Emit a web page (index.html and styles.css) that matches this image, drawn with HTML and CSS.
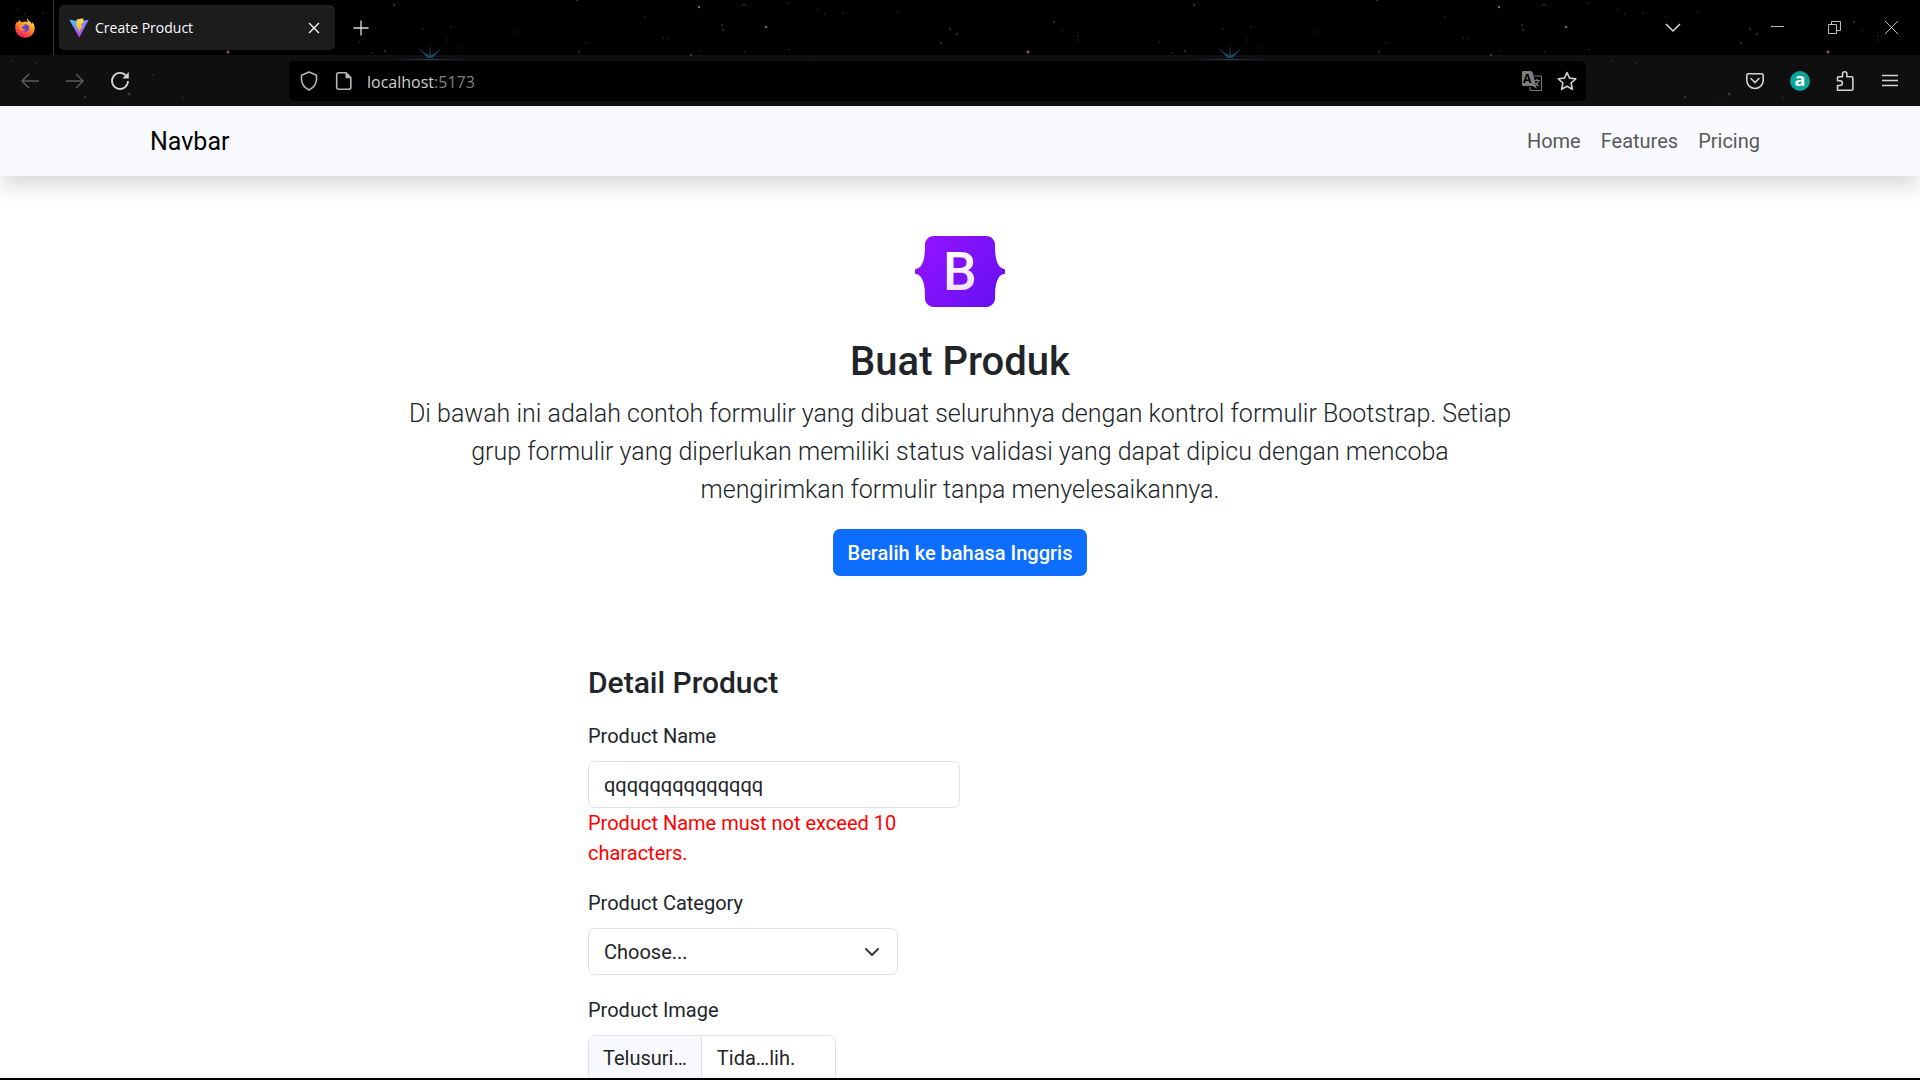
FILE: index.html
```html
<!DOCTYPE html>
<html lang="id">
<head>
<meta charset="utf-8">
<meta name="viewport" content="width=device-width, initial-scale=1">
<title>Create Product</title>
<link rel="stylesheet" href="styles.css">
</head>
<body>
<header class="browser">
  <svg class="sky" aria-hidden="true">
    <defs>
      <linearGradient id="ray" x1="0" x2="1"><stop offset="0" stop-color="#0b5f80" stop-opacity="0"/><stop offset=".5" stop-color="#2b8fb0"/><stop offset="1" stop-color="#0b5f80" stop-opacity="0"/></linearGradient>
      <pattern id="stars" width="800" height="106" patternUnits="userSpaceOnUse">
        <g fill="#fff">
          <g opacity=".4"><circle cx="699" cy="7" r="1.3"/><circle cx="766" cy="27" r="1.3"/></g>
          <g opacity=".2"><circle cx="394" cy="5" r="1.2"/><circle cx="577" cy="0" r="1.2"/><circle cx="723" cy="30" r="1"/><circle cx="722" cy="25" r="1"/><circle cx="385" cy="51" r="1.1"/><circle cx="579" cy="52" r="1.1"/><circle cx="157" cy="34" r="1"/><circle cx="150" cy="29" r="1"/><circle cx="141" cy="43" r="1"/><circle cx="254" cy="22" r="1"/><circle cx="129" cy="94" r="1.4"/><circle cx="744" cy="5" r="1"/></g>
          <g opacity=".1"><circle cx="18" cy="10" r="1"/><circle cx="43" cy="13" r="1"/><circle cx="98" cy="12" r="1"/><circle cx="25" cy="14" r="1"/><circle cx="262" cy="30" r="1"/><circle cx="278" cy="36" r="1"/><circle cx="278" cy="40" r="1"/><circle cx="359" cy="42" r="1"/><circle cx="372" cy="53" r="1"/><circle cx="423" cy="29" r="1"/><circle cx="451" cy="27" r="1"/><circle cx="447" cy="40" r="1"/><circle cx="459" cy="48" r="1"/><circle cx="515" cy="32" r="1"/><circle cx="586" cy="43" r="1"/><circle cx="645" cy="17" r="1"/><circle cx="663" cy="38" r="1"/><circle cx="668" cy="38" r="1"/><circle cx="700" cy="51" r="1"/><circle cx="788" cy="3" r="1"/><circle cx="789" cy="50" r="1"/><circle cx="745" cy="52" r="1"/><circle cx="153" cy="75" r="1"/><circle cx="56" cy="72" r="1"/><circle cx="183" cy="98" r="1"/><circle cx="12" cy="61" r="1"/><circle cx="36" cy="63" r="1"/><circle cx="120" cy="101" r="1"/></g>
        </g>
        <g fill="#d8805c"><circle cx="228" cy="52" r="1.5" opacity=".7"/><circle cx="691" cy="55" r="1.3" opacity=".35"/><circle cx="85" cy="97" r="1.4" opacity=".25"/></g>
        <path d="M429 58 430 44 431 58ZM428 58 418 48 431 57ZM432 58 442 48 429 57Z" fill="#166d92" opacity=".65"/>
        <path d="M390 59h80v1h-80z" fill="url(#ray)" opacity=".4"/>
      </pattern>
    </defs>
    <rect width="100%" height="100%" fill="url(#stars)"/>
  </svg>

  <div class="tabstrip">
    <button class="firefox" aria-label="Firefox View">
      <svg width="20" height="20" viewBox="0 0 20 20">
        <defs>
          <linearGradient id="fox" x1=".8" y1="0" x2=".3" y2="1"><stop offset="0" stop-color="#fff04a"/><stop offset=".4" stop-color="#ffa023"/><stop offset=".75" stop-color="#ff4a40"/><stop offset="1" stop-color="#e5187c"/></linearGradient>
          <radialGradient id="globe"><stop offset="0" stop-color="#5541c9"/><stop offset="1" stop-color="#8d3fd0"/></radialGradient>
        </defs>
        <path d="M12.200 0c-.6 2 .2 3 1 4C11.700 3.300 9 3.200 7.300 4.300 5.800 4.200 5 3 5 2.100 3.900 2.700 3.200 3.700 2.900 4.700L1.400 3.900C.5 5.600 0 8 .3 11A9.700 9 0 0 0 19.700 10.500C19.800 7.500 18.800 5.300 17 4c.2 1 .2 1.600 0 2.200C16 3.300 13 3 12.200 0Z" fill="url(#fox)"/>
        <circle cx="10.500" cy="10" r="3.800" fill="url(#globe)"/>
        <path d="M4 7c2-1.500 4-.5 6 0-1 1.500-2.500 1.300-3.500 2 .3 2 2 2.700 4 2.200-1.500 2-5 1.500-6-1Z" fill="#ff9a2b"/>
      </svg>
    </button>
    <div class="tab">
      <svg width="20" height="20" viewBox="0 0 20 20" aria-hidden="true">
        <defs>
          <linearGradient id="vite" x1="0" y1="0" x2=".6" y2="1"><stop offset="0" stop-color="#41d1ff"/><stop offset="1" stop-color="#bd34fe"/></linearGradient>
          <linearGradient id="bolt" x1="0" y1="0" x2="0" y2="1"><stop offset="0" stop-color="#ffe45c"/><stop offset="1" stop-color="#ffa800"/></linearGradient>
        </defs>
        <path d="M.3 1.800 10 3.300 19.700 1.800 10.300 19.500Z" fill="url(#vite)"/>
        <path d="M14.200.2 7.700 1.400 7.200 9.200 9.200 8.800 8.700 11.600 10.300 11.200 9.500 15.500 13.900 7.600 11.800 8 12.500 5.400 14.600 5Z" fill="url(#bolt)"/>
      </svg>
      <span class="tab-title">Create Product</span>
      <button class="tab-close" aria-label="Close tab"><svg width="12" height="12" viewBox="0 0 12 12"><path d="M1 1 11 11M11 1 1 11" stroke="#fbfbfe" stroke-width="1.300"/></svg></button>
    </div>
    <button class="new-tab" aria-label="New tab"><svg width="16" height="16" viewBox="0 0 16 16"><path d="M8 .5v15M.5 8h15" stroke="#ddd" stroke-width="1.300"/></svg></button>
    <div class="window-controls">
      <button class="list-tabs" aria-label="List all tabs"><svg width="16" height="16" viewBox="0 0 16 16"><path d="m1 4 7 7 7-7" fill="none" stroke="#ddd" stroke-width="1.500"/></svg></button>
      <button aria-label="Minimize"><svg width="13" height="13" viewBox="0 0 13 13"><path d="M0 5.500h13" stroke="#bbb"/></svg></button>
      <button aria-label="Restore"><svg width="13" height="13" viewBox="0 0 13 13"><path d="M.5 3.500h8v9h-8zM3.500 3.500v-3h9v9h-4" fill="none" stroke="#bbb"/></svg></button>
      <button aria-label="Close"><svg width="13" height="13" viewBox="0 0 13 13"><path d="M0 0 13 13M13 0 0 13" stroke="#bbb"/></svg></button>
    </div>
  </div>

  <div class="toolbar">
    <div class="history">
      <button aria-label="Back"><svg width="20" height="20" viewBox="0 0 20 20"><path d="M19 10H2M9 3 2 10l7 7" fill="none" stroke="#5b5b5b" stroke-width="1.500"/></svg></button>
      <button aria-label="Forward"><svg width="20" height="20" viewBox="0 0 20 20"><path d="M1 10h17M11 3l7 7-7 7" fill="none" stroke="#5b5b5b" stroke-width="1.500"/></svg></button>
      <button aria-label="Reload"><svg width="20" height="20" viewBox="0 0 20 20"><path d="M16.300 5A8 8 0 1 0 18 10" fill="none" stroke="#d2d2d2" stroke-width="1.800"/><path d="M18.800 1v6.500h-6.500Z" fill="#d2d2d2"/></svg></button>
    </div>
    <div class="urlbar">
      <svg width="20" height="20" viewBox="0 0 20 20" aria-hidden="true"><path d="M10 1 17.500 4.300C18.300 10.500 16 16 10 19 4 16 1.700 10.500 2.500 4.300Z" fill="none" stroke="#b5b5b5" stroke-width="1.600" stroke-linejoin="round"/></svg>
      <svg width="18" height="20" viewBox="0 0 18 20" aria-hidden="true"><path d="M4.500 1.800h7.700L16.800 6.500v10a1.800 1.800 0 0 1-1.800 1.800H4.500a1.800 1.800 0 0 1-1.800-1.800V3.600a1.800 1.800 0 0 1 1.800-1.800Z" fill="none" stroke="#b5b5b5" stroke-width="1.600"/><path d="M11.500 1.500v5.700h5.700Z" fill="#b5b5b5"/></svg>
      <div class="url" role="textbox" aria-label="Address" contenteditable="true" spellcheck="false">localhost<span class="url-port">:5173</span></div>
      <button aria-label="Translate page"><svg width="20" height="20" viewBox="0 0 20 20"><path d="M1 0h8l2 2 2.500 11.500L15 18l-4-3H1a1 1 0 0 1-1-1V1a1 1 0 0 1 1-1Z" fill="#7d7d7d"/><text class="glyph-a" x="1" y="12">A</text><path d="M12 5h6.500a1 1 0 0 1 1 1v12.500a1 1 0 0 1-1 1H9a1 1 0 0 1-1-1V16M12 9.500h6M15 8v1.500M13 15c2-1 3-3 3.500-5.500M13.500 11.500c.5 1.500 2 3 3.500 3.500" fill="none" stroke="#777" stroke-width="1.200"/></svg></button>
      <button aria-label="Bookmark this page"><svg width="20" height="20" viewBox="0 0 20 20"><path d="m10 1.500 2.500 5.600 6.200.7-4.600 4.200 1.300 6.300L10 15.200 4.600 18.300 5.900 12 1.300 7.800l6.200-.7Z" fill="none" stroke="#cfcfcf" stroke-width="1.600" stroke-linejoin="round"/></svg></button>
    </div>
    <div class="extensions">
      <button aria-label="Save to Pocket"><svg width="20" height="20" viewBox="0 0 20 20"><path d="M3.300 2.800h13.400a1.500 1.500 0 0 1 1.500 1.500V9.500a8.200 8 0 0 1-16.400 0V4.300a1.500 1.500 0 0 1 1.500-1.500Z" fill="none" stroke="#d2d2d2" stroke-width="1.600"/><path d="m6 7.500 4 4 4-4" fill="none" stroke="#d2d2d2" stroke-width="1.600" stroke-linecap="round"/></svg></button>
      <button class="ext-a" aria-label="Extension">a</button>
      <button aria-label="Extensions"><svg width="20" height="20" viewBox="0 0 20 20"><path d="M2.500 19.200V14.500H5a2.400 2.400 0 0 0 0-4.800H2.500V7a1.300 1.300 0 0 1 1.300-1.300H7.500V3a2.200 2.200 0 0 1 4.400 0v2.700h4.700A1.300 1.300 0 0 1 17.900 7v10.900a1.300 1.300 0 0 1-1.300 1.300Z" fill="none" stroke="#d2d2d2" stroke-width="1.600" stroke-linejoin="round"/></svg></button>
      <button aria-label="Menu"><svg width="20" height="20" viewBox="0 0 20 20"><path d="M2 4.500h16M2 9.500h16M2 14.500h16" stroke="#d2d2d2" stroke-width="1.500"/></svg></button>
    </div>
  </div>
</header>

<div class="viewport">
  <nav class="navbar">
    <div class="container">
      <a class="navbar-brand" href="#">Navbar</a>
      <div class="navbar-nav">
        <a href="#">Home</a>
        <a href="#">Features</a>
        <a href="#">Pricing</a>
      </div>
    </div>
  </nav>

  <main>
    <section class="hero">
      <svg class="logo" width="90" height="71" viewBox="0 0 512 408" preserveAspectRatio="none" role="img" aria-label="Bootstrap">
        <defs>
          <linearGradient id="bs" x1="76" y1="10" x2="523" y2="365" gradientUnits="userSpaceOnUse"><stop stop-color="#9013fe"/><stop offset="1" stop-color="#6610f2"/></linearGradient>
          <linearGradient id="bs-letter" x1="193" y1="95" x2="293" y2="267" gradientUnits="userSpaceOnUse"><stop stop-color="#fff"/><stop offset="1" stop-color="#f1e5fc"/></linearGradient>
        </defs>
        <path fill="url(#bs)" d="M56.481 53.320C55.515 25.580 77.128 0 106.342 0h299.353c29.214 0 50.827 25.580 49.861 53.320-.928 26.647.277 61.165 8.964 89.310 8.715 28.232 23.411 46.077 47.480 48.370v26c-24.069 2.293-38.765 20.138-47.480 48.370-8.687 28.145-9.892 62.663-8.964 89.310.966 27.740-20.647 53.320-49.861 53.320H106.342c-29.214 0-50.827-25.580-49.861-53.320.927-26.647-.278-61.165-8.966-89.310C38.802 237.138 24.070 219.293 0 217v-26c24.069-2.293 38.802-20.138 47.516-48.370 8.688-28.145 9.893-62.663 8.965-89.310z"/>
        <text class="logo-letter" x="256" y="313" fill="url(#bs-letter)">B</text>
      </svg>
      <h2>Buat Produk</h2>
      <p class="lead">Di bawah ini adalah contoh formulir yang dibuat seluruhnya dengan kontrol formulir Bootstrap. Setiap grup formulir yang diperlukan memiliki status validasi yang dapat dipicu dengan mencoba mengirimkan formulir tanpa menyelesaikannya.</p>
      <button class="btn-primary" type="button">Beralih ke bahasa Inggris</button>
    </section>

    <form class="product-form">
      <h4>Detail Product</h4>
      <div class="field field-name">
        <label for="name">Product Name</label>
        <input class="control" id="name" type="text" value="qqqqqqqqqqqqqq" spellcheck="false" aria-describedby="name-error">
        <p class="error" id="name-error">Product Name must not exceed 10 characters.</p>
      </div>
      <div class="field field-category">
        <label for="category">Product Category</label>
        <select class="control select" id="category"><option>Choose...</option></select>
      </div>
      <div class="field field-image">
        <label for="image">Product Image</label>
        <div class="control file">
          <span class="file-button">Telusuri…</span>
          <span class="file-name">Tida…lih.</span>
          <input class="file-input" id="image" type="file">
        </div>
      </div>
    </form>
  </main>
</div>
</body>
</html>
```

FILE: styles.css
```css
* {
  box-sizing: border-box;
}

body {
  display: flex;
  flex-direction: column;
  height: 100vh;
  margin: 0;
  padding-bottom: 2px;
  overflow: hidden;
  background: #000;
  color: #212529;
  font: 400 20px/30px Roboto, sans-serif;
}

a {
  color: inherit;
  text-decoration: none;
}

h2,
h4,
p {
  margin: 0;
}

svg {
  display: block;
  flex: none;
}

/* Browser window */
.browser {
  position: relative;
  flex: none;
  background: #000;
  font-family: "Open Sans", "Noto Sans", sans-serif;
}

.browser button {
  display: flex;
  align-items: center;
  justify-content: center;
  padding: 0;
  border: 0;
  background: none;
}

.sky {
  position: absolute;
  inset: 0;
  width: 100%;
  height: 100%;
}

.tabstrip,
.toolbar {
  position: relative;
  display: flex;
  align-items: center;
}

.tabstrip {
  height: 55px;
}

.browser .firefox {
  width: 54px;
  height: 55px;
  padding-right: 3px;
  border-right: 1px solid #333;
}

.tab {
  display: flex;
  align-items: center;
  gap: 6px;
  width: 276px;
  height: 45px;
  margin-left: 5px;
  padding: 0 15px 0 10px;
  border-radius: 5px;
  background: #1c1c1c;
}

.tab-title {
  flex: 1;
  color: #fbfbfe;
  font-size: 14px;
}

.new-tab {
  margin-left: 18px;
}

.window-controls {
  display: flex;
  align-items: center;
  gap: 44px;
  margin-left: auto;
  padding-right: 22px;
}

.window-controls .list-tabs {
  margin-right: 46px;
}

.toolbar {
  height: 51px;
  padding: 0 20px;
  background: rgba(255, 255, 255, 0.06);
}

.history {
  display: flex;
  gap: 25px;
  width: 269px;
}

.urlbar {
  display: flex;
  flex: 1;
  align-items: center;
  gap: 15px;
  height: 40px;
  padding: 0 9px 0 10px;
  border-radius: 5px;
  background: #000;
}

.url {
  flex: 1;
  padding-top: 2px;
  color: #d0d0d0;
  font-size: 16px;
  line-height: 30px;
  white-space: nowrap;
  outline: 0;
}

.url-port {
  color: #808080;
}

.glyph-a {
  fill: #000;
  font: 700 12px "Open Sans", sans-serif;
}

.extensions {
  display: flex;
  justify-content: flex-end;
  gap: 25px;
  width: 314px;
}

.browser .ext-a {
  width: 20px;
  height: 20px;
  padding-bottom: 3px;
  border-radius: 50%;
  background: #0ba398;
  color: #fff;
  font: 700 18px/20px "Open Sans", sans-serif;
}

/* Page */
.viewport {
  flex: 1;
  min-height: 0;
  overflow: hidden;
  background: #fff;
}

.navbar {
  padding: 10px 0;
  background: #f8f9fc;
  box-shadow: 0 10px 20px rgba(0, 0, 0, 0.15);
}

.container {
  display: flex;
  align-items: center;
  justify-content: space-between;
  max-width: 1650px;
  margin: 0 auto;
  padding: 0 15px;
}

.navbar-brand {
  padding-top: 2px;
  color: #000;
  font-size: 25px;
  line-height: 48px;
}

.navbar-nav {
  display: flex;
  gap: 20px;
  padding-right: 10px;
  color: #595a5b;
}

.hero {
  display: flex;
  flex-direction: column;
  align-items: center;
  max-width: 1110px;
  margin: 0 auto;
  padding: 60px 0;
  text-align: center;
}

.logo {
  margin-bottom: 30px;
}

.logo-letter {
  font: 500 305px Roboto, sans-serif;
  text-anchor: middle;
}

h2 {
  margin-bottom: 8px;
  font-size: 40px;
  font-weight: 500;
  line-height: 50px;
}

.lead {
  margin-bottom: 20px;
  font-size: 25px;
  font-weight: 300;
  line-height: 38px;
}

.btn-primary {
  height: 47px;
  padding: 0 15px;
  border: 0;
  border-radius: 7px;
  background: #0d6efd;
  color: #fff;
  font: 500 20px/30px Roboto, sans-serif;
}

.product-form {
  display: flex;
  flex-direction: column;
  gap: 20px;
  max-width: 744px;
  margin: 0 auto;
  padding-top: 28px;
}

h4 {
  font-size: 30px;
  font-weight: 500;
  line-height: 37px;
}

.field label {
  display: block;
  margin-bottom: 10px;
}

.field-name {
  width: 50%;
}

.field-category {
  width: calc(100% * 5 / 12);
}

.field-image {
  width: calc(100% / 3);
}

.control {
  display: block;
  width: 100%;
  height: 47px;
  padding: 0 15px;
  border: 1px solid #dee2e6;
  border-radius: 7px;
  background: #fff;
  color: #212529;
  font: 400 20px/30px Roboto, sans-serif;
}

.error {
  color: #f00;
}

.select {
  appearance: none;
  background: #fff url("data:image/svg+xml,%3Csvg xmlns='http://www.w3.org/2000/svg' viewBox='0 0 16 16'%3E%3Cpath fill='none' stroke='%23343a40' stroke-linecap='round' stroke-linejoin='round' stroke-width='2' d='m2 5 6 6 6-6'/%3E%3C/svg%3E") no-repeat right 17px center / 16px;
}

.file {
  position: relative;
  display: flex;
  align-items: stretch;
  padding: 0;
  overflow: hidden;
  line-height: 45px;
}

.file-button {
  padding: 0 14px;
  border-right: 1px solid #dee2e6;
  background: #f8f9fc;
}

.file-name {
  padding: 0 15px;
}

.file-input {
  position: absolute;
  inset: 0;
  width: 100%;
  opacity: 0;
}
```
